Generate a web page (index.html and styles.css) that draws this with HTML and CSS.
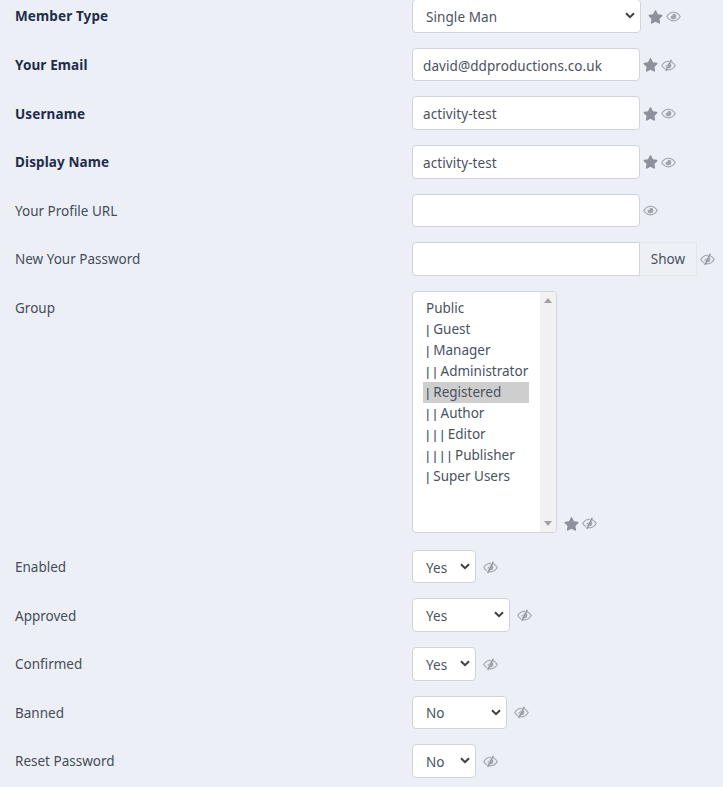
FILE: index.html
```html
<!DOCTYPE html>
<html lang="en">
<head>
<meta charset="utf-8">
<title>Profile</title>
<link rel="stylesheet" href="styles.css">
</head>
<body>
<svg class="defs" aria-hidden="true">
  <symbol id="star" viewBox="0 0 576 512"><path d="M259.3 17.8L194 150.2 47.9 171.5c-26.2 3.8-36.7 36.1-17.7 54.6l105.7 103-25 145.5c-4.5 26.3 23.2 46 46.4 33.7L288 439.6l130.7 68.7c23.2 12.2 50.9-7.4 46.4-33.7l-25-145.5 105.7-103c19-18.5 8.5-50.8-17.7-54.6L382 150.2 316.7 17.8c-11.7-23.6-45.6-23.9-57.4 0z"/></symbol>
  <symbol id="eye" viewBox="0 0 576 512"><path d="M288 144a110.94 110.94 0 0 0-31.24 5 55.4 55.4 0 0 1 7.24 27 56 56 0 0 1-56 56 55.4 55.4 0 0 1-27-7.24A111.71 111.71 0 1 0 288 144zm284.52 97.4C518.29 135.59 410.93 64 288 64S57.68 135.64 3.48 241.41a32.35 32.35 0 0 0 0 29.19C57.71 376.41 165.07 448 288 448s230.32-71.64 284.52-177.41a32.35 32.35 0 0 0 0-29.19zM288 400c-98.65 0-189.09-55-237.93-144C98.91 167 189.34 112 288 112s189.09 55 237.93 144C477.1 345 386.66 400 288 400z"/></symbol>
  <symbol id="eye-off" viewBox="0 0 576 512"><path d="M288 144a110.94 110.94 0 0 0-31.24 5 55.4 55.4 0 0 1 7.24 27 56 56 0 0 1-56 56 55.4 55.4 0 0 1-27-7.24A111.71 111.71 0 1 0 288 144zm284.52 97.4C518.29 135.59 410.93 64 288 64S57.68 135.64 3.48 241.41a32.35 32.35 0 0 0 0 29.19C57.71 376.41 165.07 448 288 448s230.32-71.64 284.52-177.41a32.35 32.35 0 0 0 0-29.19zM288 400c-98.65 0-189.09-55-237.93-144C98.91 167 189.34 112 288 112s189.09 55 237.93 144C477.1 345 386.66 400 288 400z"/><path class="slash-gap" d="M410 6l-270 470"/><path class="slash" d="M400 30L176 470"/></symbol>
</svg>
<form class="form">
  <div class="row">
    <label class="label req">Member Type</label>
    <div class="field">
      <select class="select w-full"><option>Single Man</option></select>
      <span class="icons gap-select"><svg class="star"><use href="#star"/></svg><svg class="eye"><use href="#eye"/></svg></span>
    </div>
  </div>
  <div class="row">
    <label class="label req">Your Email</label>
    <div class="field">
      <input class="input" value="david@ddproductions.co.uk">
      <span class="icons"><svg class="star"><use href="#star"/></svg><svg class="eye"><use href="#eye-off"/></svg></span>
    </div>
  </div>
  <div class="row">
    <label class="label req">Username</label>
    <div class="field">
      <input class="input" value="activity-test">
      <span class="icons"><svg class="star"><use href="#star"/></svg><svg class="eye"><use href="#eye"/></svg></span>
    </div>
  </div>
  <div class="row">
    <label class="label req">Display Name</label>
    <div class="field">
      <input class="input" value="activity-test">
      <span class="icons"><svg class="star"><use href="#star"/></svg><svg class="eye"><use href="#eye"/></svg></span>
    </div>
  </div>
  <div class="row">
    <label class="label">Your Profile URL</label>
    <div class="field">
      <input class="input">
      <span class="icons"><svg class="eye solo"><use href="#eye"/></svg></span>
    </div>
  </div>
  <div class="row">
    <label class="label">New Your Password</label>
    <div class="field">
      <input class="input joined">
      <button class="show" type="button">Show</button>
      <span class="icons"><svg class="eye solo"><use href="#eye-off"/></svg></span>
    </div>
  </div>
  <div class="row row-list">
    <label class="label">Group</label>
    <div class="field field-end">
      <div class="listbox">
        <div class="options">
          <div class="option">Public</div>
          <div class="option"><span class="tree">| </span>Guest</div>
          <div class="option"><span class="tree">| </span>Manager</div>
          <div class="option"><span class="tree">| | </span>Administrator</div>
          <div class="option selected"><span class="tree">| </span>Registered</div>
          <div class="option"><span class="tree">| | </span>Author</div>
          <div class="option"><span class="tree">| | | </span>Editor</div>
          <div class="option"><span class="tree">| | | | </span>Publisher</div>
          <div class="option"><span class="tree">| </span>Super Users</div>
        </div>
        <div class="scrollbar"><span class="arrow-up"></span><span class="arrow-down"></span></div>
      </div>
      <span class="icons gap-select icons-low"><svg class="star"><use href="#star"/></svg><svg class="eye"><use href="#eye-off"/></svg></span>
    </div>
  </div>
  <div class="row">
    <label class="label">Enabled</label>
    <div class="field">
      <select class="select w-yes"><option>Yes</option></select>
      <span class="icons gap-select"><svg class="eye solo"><use href="#eye-off"/></svg></span>
    </div>
  </div>
  <div class="row">
    <label class="label">Approved</label>
    <div class="field">
      <select class="select w-approved"><option>Yes</option></select>
      <span class="icons gap-select"><svg class="eye solo"><use href="#eye-off"/></svg></span>
    </div>
  </div>
  <div class="row">
    <label class="label">Confirmed</label>
    <div class="field">
      <select class="select w-yes"><option>Yes</option></select>
      <span class="icons gap-select"><svg class="eye solo"><use href="#eye-off"/></svg></span>
    </div>
  </div>
  <div class="row">
    <label class="label">Banned</label>
    <div class="field">
      <select class="select w-banned"><option>No</option></select>
      <span class="icons gap-select"><svg class="eye solo"><use href="#eye-off"/></svg></span>
    </div>
  </div>
  <div class="row">
    <label class="label">Reset Password</label>
    <div class="field">
      <select class="select w-yes"><option>No</option></select>
      <span class="icons gap-select"><svg class="eye solo"><use href="#eye-off"/></svg></span>
    </div>
  </div>
</form>
</body>
</html>
```
FILE: styles.css
```css
* { box-sizing: border-box; }
html, body { margin: 0; height: 787px; overflow: hidden; }
body {
  background: #ecf0f6;
  color: #4a525e;
  font-family: "Noto Sans", "Open Sans", sans-serif;
  font-size: 13.5px;
}
.defs { display: none; }
.form {
  margin-top: -0.75px;
  padding-left: 15px;
  display: flex;
  flex-direction: column;
  gap: 15px;
}
.row { display: flex; align-items: flex-start; }
.row-list { margin-bottom: 2px; }
.label {
  flex: 0 0 397px;
  padding-top: 7.2px;
  line-height: 20px;
  color: #454c59;
}
.label.req { font-weight: 700; color: #1f2d4a; letter-spacing: 0.12px; }
.field { display: flex; align-items: center; }
.field-end { align-items: flex-end; }
.input, .select {
  height: 33.6px;
  border: 1px solid #d0d4da;
  border-radius: 4px;
  background-color: #fff;
  color: #4a525e;
  font: inherit;
  letter-spacing: 0.08px;
}
.input { width: 228px; padding: 2px 10px 0; outline: none; }
.input.joined { border-top-right-radius: 0; border-bottom-right-radius: 0; }
.select {
  padding: 2px 24px 0 13px;
  appearance: none;
  background-image: url("data:image/svg+xml,%3Csvg xmlns='http://www.w3.org/2000/svg' viewBox='0 0 10 7'%3E%3Cpath d='M1 1.2l4 4 4-4' fill='none' stroke='%233f3f3f' stroke-width='2'/%3E%3C/svg%3E");
  background-repeat: no-repeat;
  background-size: 10px 7px;
  background-position: right 5px top 12px;
}
.w-full { width: 229px; }
.w-yes { width: 64px; }
.w-approved { width: 98px; }
.w-banned { width: 95px; }
.show {
  width: 57px;
  height: 33.6px;
  border: 1px solid #e3e6ea;
  border-left: 0;
  background: #edf0f5;
  color: #4a525e;
  font: inherit;
  padding: 0;
}
.icons { display: flex; align-items: center; margin-left: 3px; padding-top: 1px; }
.gap-select { margin-left: 7px; }
.icons-low { padding-bottom: 2px; }
.star { width: 15px; height: 14px; fill: #8c919c; }
.eye { width: 15px; height: 13px; margin-left: 2.5px; fill: #a1a6ae; }
.eye.solo { margin-left: 0; }
.slash-gap { fill: none; stroke: #ecf0f6; stroke-width: 70; }
.slash { fill: none; stroke: #8f949d; stroke-width: 56; }
.listbox {
  width: 145px;
  height: 242px;
  display: flex;
  border: 1px solid #d0d4da;
  border-radius: 4px;
  background: #fff;
  overflow: hidden;
}
.options { flex: 1; min-width: 0; padding: 6px 11px 0 10px; }
.option { height: 21px; line-height: 21px; padding-left: 3px; white-space: nowrap; }
.option.selected { background: #cecece; }
.tree { font-family: "Liberation Sans", sans-serif; font-size: 13.5px; }
.scrollbar {
  flex: 0 0 16px;
  background: #f1f1f1;
  display: flex;
  flex-direction: column;
  justify-content: space-between;
  align-items: center;
  padding: 6px 0;
}
.arrow-up, .arrow-down {
  width: 0;
  height: 0;
  border-left: 4px solid transparent;
  border-right: 4px solid transparent;
}
.arrow-up { border-bottom: 5px solid #a3a3a3; }
.arrow-down { border-top: 5px solid #a3a3a3; }
```
